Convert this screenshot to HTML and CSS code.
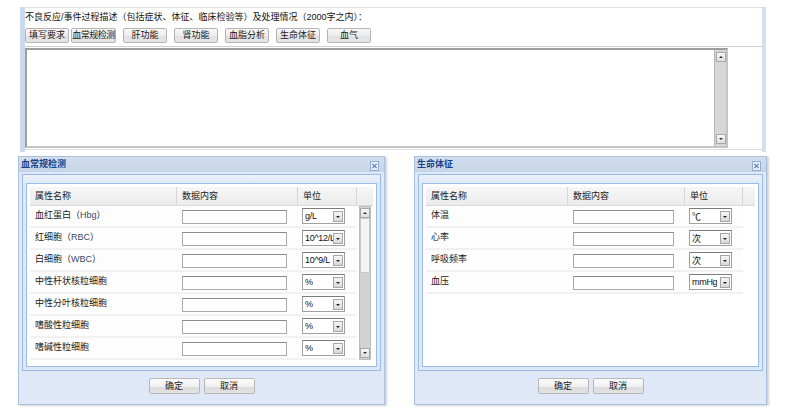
FILE: index.html
```html
<!DOCTYPE html>
<html lang="zh-CN">
<head>
<meta charset="utf-8">
<title>不良反应</title>
<link rel="stylesheet" href="styles.css">
</head>
<body>
<div class="top">
  <div class="top-head">
    <div class="top-title">不良反应/事件过程描述（包括症状、体征、临床检验等）及处理情况（2000字之内）：</div>
    <div class="tool-row">
      <span class="tbtn tight">填写要求</span>
      <span class="tbtn narrow">血常规检测</span>
      <span class="tbtn">肝功能</span>
      <span class="tbtn">肾功能</span>
      <span class="tbtn">血脂分析</span>
      <span class="tbtn">生命体征</span>
      <span class="tbtn">血气</span>
    </div>
  </div>
  <div class="top-body">
    <div class="textarea">
      <div class="vscroll">
        <span class="arr up"></span>
        <span class="arr down"></span>
      </div>
    </div>
  </div>
</div>

<div class="desk">
  <div class="dlg dlg-left">
    <div class="dlg-head">
      <span class="dlg-title">血常规检测</span>
      <svg class="close" width="9" height="10" viewBox="0 0 9 10"><rect x="0.5" y="0.5" width="8" height="9" fill="#e9eff8" stroke="#93acd3"/><path d="M2.3 2.8 L6.7 7.2 M6.7 2.8 L2.3 7.2" stroke="#5b7fb4" stroke-width="1.2"/></svg>
    </div>
    <div class="dlg-body">
      <div class="outer">
        <div class="inner">
          <div class="ghead">
            <div class="gh c1">属性名称</div>
            <div class="gh c2">数据内容</div>
            <div class="gh c3">单位</div>
            <div class="gh c4"></div>
          </div>
          <div class="gbody">
            <div class="rows">
              <div class="row"><div class="c1 lbl">血红蛋白（<span class="lat">Hbg</span>）</div><div class="c2"><span class="inp"></span></div><div class="c3"><span class="sel"><span class="val">g/L</span><span class="drop"></span></span></div></div>
              <div class="row"><div class="c1 lbl">红细胞（<span class="lat">RBC</span>）</div><div class="c2"><span class="inp"></span></div><div class="c3"><span class="sel"><span class="val">10^12/L</span><span class="drop"></span></span></div></div>
              <div class="row"><div class="c1 lbl">白细胞（<span class="lat">WBC</span>）</div><div class="c2"><span class="inp"></span></div><div class="c3"><span class="sel"><span class="val">10^9/L</span><span class="drop"></span></span></div></div>
              <div class="row"><div class="c1 lbl">中性杆状核粒细胞</div><div class="c2"><span class="inp"></span></div><div class="c3"><span class="sel"><span class="val">%</span><span class="drop"></span></span></div></div>
              <div class="row"><div class="c1 lbl">中性分叶核粒细胞</div><div class="c2"><span class="inp"></span></div><div class="c3"><span class="sel"><span class="val">%</span><span class="drop"></span></span></div></div>
              <div class="row"><div class="c1 lbl">嗜酸性粒细胞</div><div class="c2"><span class="inp"></span></div><div class="c3"><span class="sel"><span class="val">%</span><span class="drop"></span></span></div></div>
              <div class="row"><div class="c1 lbl">嗜碱性粒细胞</div><div class="c2"><span class="inp"></span></div><div class="c3"><span class="sel"><span class="val">%</span><span class="drop"></span></span></div></div>
            </div>
            <div class="sbcol">
              <div class="sb">
                <span class="arr up"></span>
                <span class="thumb"></span>
                <span class="track"></span>
                <span class="arr down"></span>
              </div>
            </div>
          </div>
        </div>
      </div>
      <div class="btns">
        <span class="dbtn">确定</span>
        <span class="dbtn">取消</span>
      </div>
    </div>
  </div>

  <div class="dlg dlg-right">
    <div class="dlg-head">
      <span class="dlg-title">生命体征</span>
      <svg class="close" width="9" height="10" viewBox="0 0 9 10"><rect x="0.5" y="0.5" width="8" height="9" fill="#e9eff8" stroke="#93acd3"/><path d="M2.3 2.8 L6.7 7.2 M6.7 2.8 L2.3 7.2" stroke="#5b7fb4" stroke-width="1.2"/></svg>
    </div>
    <div class="dlg-body">
      <div class="outer">
        <div class="inner">
          <div class="ghead">
            <div class="gh c1">属性名称</div>
            <div class="gh c2">数据内容</div>
            <div class="gh c3">单位</div>
            <div class="gh c4"></div>
          </div>
          <div class="gbody">
            <div class="rows">
              <div class="row"><div class="c1 lbl">体温</div><div class="c2"><span class="inp"></span></div><div class="c3"><span class="sel"><span class="val">℃</span><span class="drop"></span></span></div></div>
              <div class="row"><div class="c1 lbl">心率</div><div class="c2"><span class="inp"></span></div><div class="c3"><span class="sel"><span class="val">次</span><span class="drop"></span></span></div></div>
              <div class="row"><div class="c1 lbl">呼吸频率</div><div class="c2"><span class="inp"></span></div><div class="c3"><span class="sel"><span class="val">次</span><span class="drop"></span></span></div></div>
              <div class="row"><div class="c1 lbl">血压</div><div class="c2"><span class="inp"></span></div><div class="c3"><span class="sel"><span class="val">mmHg</span><span class="drop"></span></span></div></div>
            </div>
          </div>
        </div>
      </div>
      <div class="btns">
        <span class="dbtn">确定</span>
        <span class="dbtn">取消</span>
      </div>
    </div>
  </div>
</div>
</body>
</html>
```

FILE: styles.css
```css
* { box-sizing: border-box; }
html, body { margin: 0; padding: 0; background: #fff; }
body {
  font-family: "Liberation Sans", "Noto Sans CJK SC", sans-serif;
  font-size: 9px;
  color: #222;
  width: 793px;
  height: 419px;
  overflow: hidden;
}

/* ---------- top panel ---------- */
.top {
  margin: 7px 0 0 20px;
  width: 746px;
  height: 145px;
  border-left: 5px solid #cad9ee;
  border-right: 4px solid #d3dff0;
  border-top: 1px solid #dedede;
  display: flex;
  flex-direction: column;
}
.top-head {
  height: 39px;
  padding-top: 3px;
  border-bottom: 1px solid #cfcfcf;
}
.top-title {
  height: 12px;
  line-height: 12px;
  white-space: nowrap;
  color: #111;
}
.tool-row {
  display: flex;
  gap: 7px;
  margin-top: 5px;
}
.tbtn {
  width: 44px;
  height: 15px;
  line-height: 13px;
  text-align: center;
  white-space: nowrap;
  border: 1px solid #b4b4b4;
  border-radius: 2px;
  background: linear-gradient(#f7f7f7, #ececec 50%, #e0e0e0 51%, #e6e6e6);
  color: #1a1a1a;
}
.tbtn.tight { margin-right: -5px; }
.tbtn.narrow { width: 45px; letter-spacing: -0.5px; }
.top-body {
  height: 103px;
  padding-top: 1px;
  border-bottom: 1px solid #dcdcdc;
}
.textarea {
  width: 703px;
  height: 100px;
  border: 2px solid;
  border-color: #9d9d9d #c4c4c4 #c4c4c4 #9d9d9d;
  background: #fff;
  display: flex;
  justify-content: flex-end;
}
.vscroll {
  width: 12px;
  height: 100%;
  background: #d7d7d7;
  border-left: 1px solid #b5b5b5;
  padding: 2px 1px;
  display: flex;
  flex-direction: column;
  justify-content: space-between;
}

/* arrows shared */
.arr {
  display: block;
  width: 10px;
  height: 10px;
  border: 1px solid #a8a8a8;
  background: linear-gradient(#f8f8f8, #dedede);
  position: relative;
}
.arr::after {
  content: "";
  position: absolute;
  left: 2px;
  top: 3px;
  border-left: 2px solid transparent;
  border-right: 2px solid transparent;
}
.arr.up::after { border-bottom: 2px solid #333; }
.arr.down::after { border-top: 2px solid #333; }

/* ---------- dialogs ---------- */
.desk {
  display: flex;
  gap: 29px;
  padding-left: 18px;
  margin-top: 4px;
}
.dlg {
  height: 249px;
  border: 1px solid #aac0de;
  box-shadow: 2px 1px 2px rgba(0, 0, 0, 0.18);
  background: #dfe8f6;
  display: flex;
  flex-direction: column;
}
.dlg-left { width: 367px; }
.dlg-right { width: 353px; }

.dlg-head {
  height: 15px;
  background: linear-gradient(#d2deee, #c6d4e7);
  display: flex;
  align-items: center;
  justify-content: space-between;
  padding: 0 5px 0 2px;
}
.dlg-title {
  font-weight: bold;
  color: #15428b;
  line-height: 15px;
}
.close { display: block; margin-top: 2px; }

.dlg-body {
  flex: 1;
  padding: 2px 3px 0 3px;
  display: flex;
  flex-direction: column;
}
.outer {
  height: 197px;
  border: 1px solid #99bbe8;
  background: linear-gradient(#eaf1fa, #dfe8f6 10px);
  padding: 8px 3px 3px 3px;
  display: flex;
}
.inner {
  flex: 1;
  border: 1px solid #99bbe8;
  background: #fff;
  padding: 3px;
}

.ghead {
  display: flex;
  height: 19px;
  background: linear-gradient(#f6f6f6, #ececec);
  border-bottom: 1px solid #dadada;
}
.ghead .gh {
  line-height: 18px;
  padding: 0 0 0 5px;
  border-right: 1px solid #d6d6d6;
  color: #222;
}
.ghead .gh.c4 { border-right: none; }

.dlg-left .c1 { width: 147px; }
.dlg-left .c2 { width: 121px; }
.dlg-left .c3 { width: 59px; }
.dlg-left .c4 { width: 14px; }
.dlg-right .c1 { width: 142px; }
.dlg-right .c2 { width: 117px; }
.dlg-right .c3 { width: 58px; }
.dlg-right .c4 { width: 10px; }

.gbody { display: flex; }
.row {
  display: flex;
  height: 22px;
  background: #fdfdfd;
  border-bottom: 2px solid #f1f1f1;
}
.row > div { flex: none; }
.row .lbl {
  padding: 3px 0 0 5px;
  line-height: 12px;
  color: #222;
  white-space: nowrap;
}
.lat { color: #3a4a6a; }
.row .c2 { padding: 4px 0 0 5px; }
.row .c3 { padding: 2px 0 0 4px; }

.inp {
  display: block;
  height: 14px;
  border: 1px solid #a9a9a9;
  border-top-color: #8c8c8c;
  background: #fff;
}
.dlg-left .inp { width: 105px; }
.dlg-right .inp { width: 101px; }

.sel {
  display: flex;
  align-items: center;
  justify-content: space-between;
  width: 43px;
  height: 16px;
  border: 1px solid #a0a0a0;
  border-top-color: #7c7c7c;
  background: #fff;
  padding: 0 1px 0 2px;
}
.val {
  font-size: 9px;
  white-space: nowrap;
  overflow: hidden;
  letter-spacing: -0.3px;
  color: #111;
}
.drop {
  flex: none;
  width: 10px;
  height: 11px;
  border: 1px solid #a5a5a5;
  background: linear-gradient(#f6f6f6, #d8d8d8);
  position: relative;
}
.drop::after {
  content: "";
  position: absolute;
  left: 2px;
  top: 4px;
  border-left: 2px solid transparent;
  border-right: 2px solid transparent;
  border-top: 2px solid #222;
}

.sbcol { width: 16px; padding-left: 2px; }
.sb {
  width: 12px;
  height: 154px;
  background: #d2d2d2;
  border: 1px solid #bdbdbd;
  padding: 1px 0;
  display: flex;
  flex-direction: column;
}
.sb .thumb {
  display: block;
  height: 55px;
  background: #f4f4f4;
  border: 1px solid #c8c8c8;
}
.sb .track { display: block; flex: 1; }

.btns {
  display: flex;
  justify-content: center;
  gap: 4px;
  margin-top: 7px;
}
.dbtn {
  width: 51px;
  height: 16px;
  line-height: 14px;
  text-align: center;
  border: 1px solid #b8b8b8;
  border-radius: 2px;
  background: linear-gradient(#fbfbfb, #f0f0f0 55%, #dcdcdc 56%, #e2e2e2);
  color: #1a1a1a;
}
```
